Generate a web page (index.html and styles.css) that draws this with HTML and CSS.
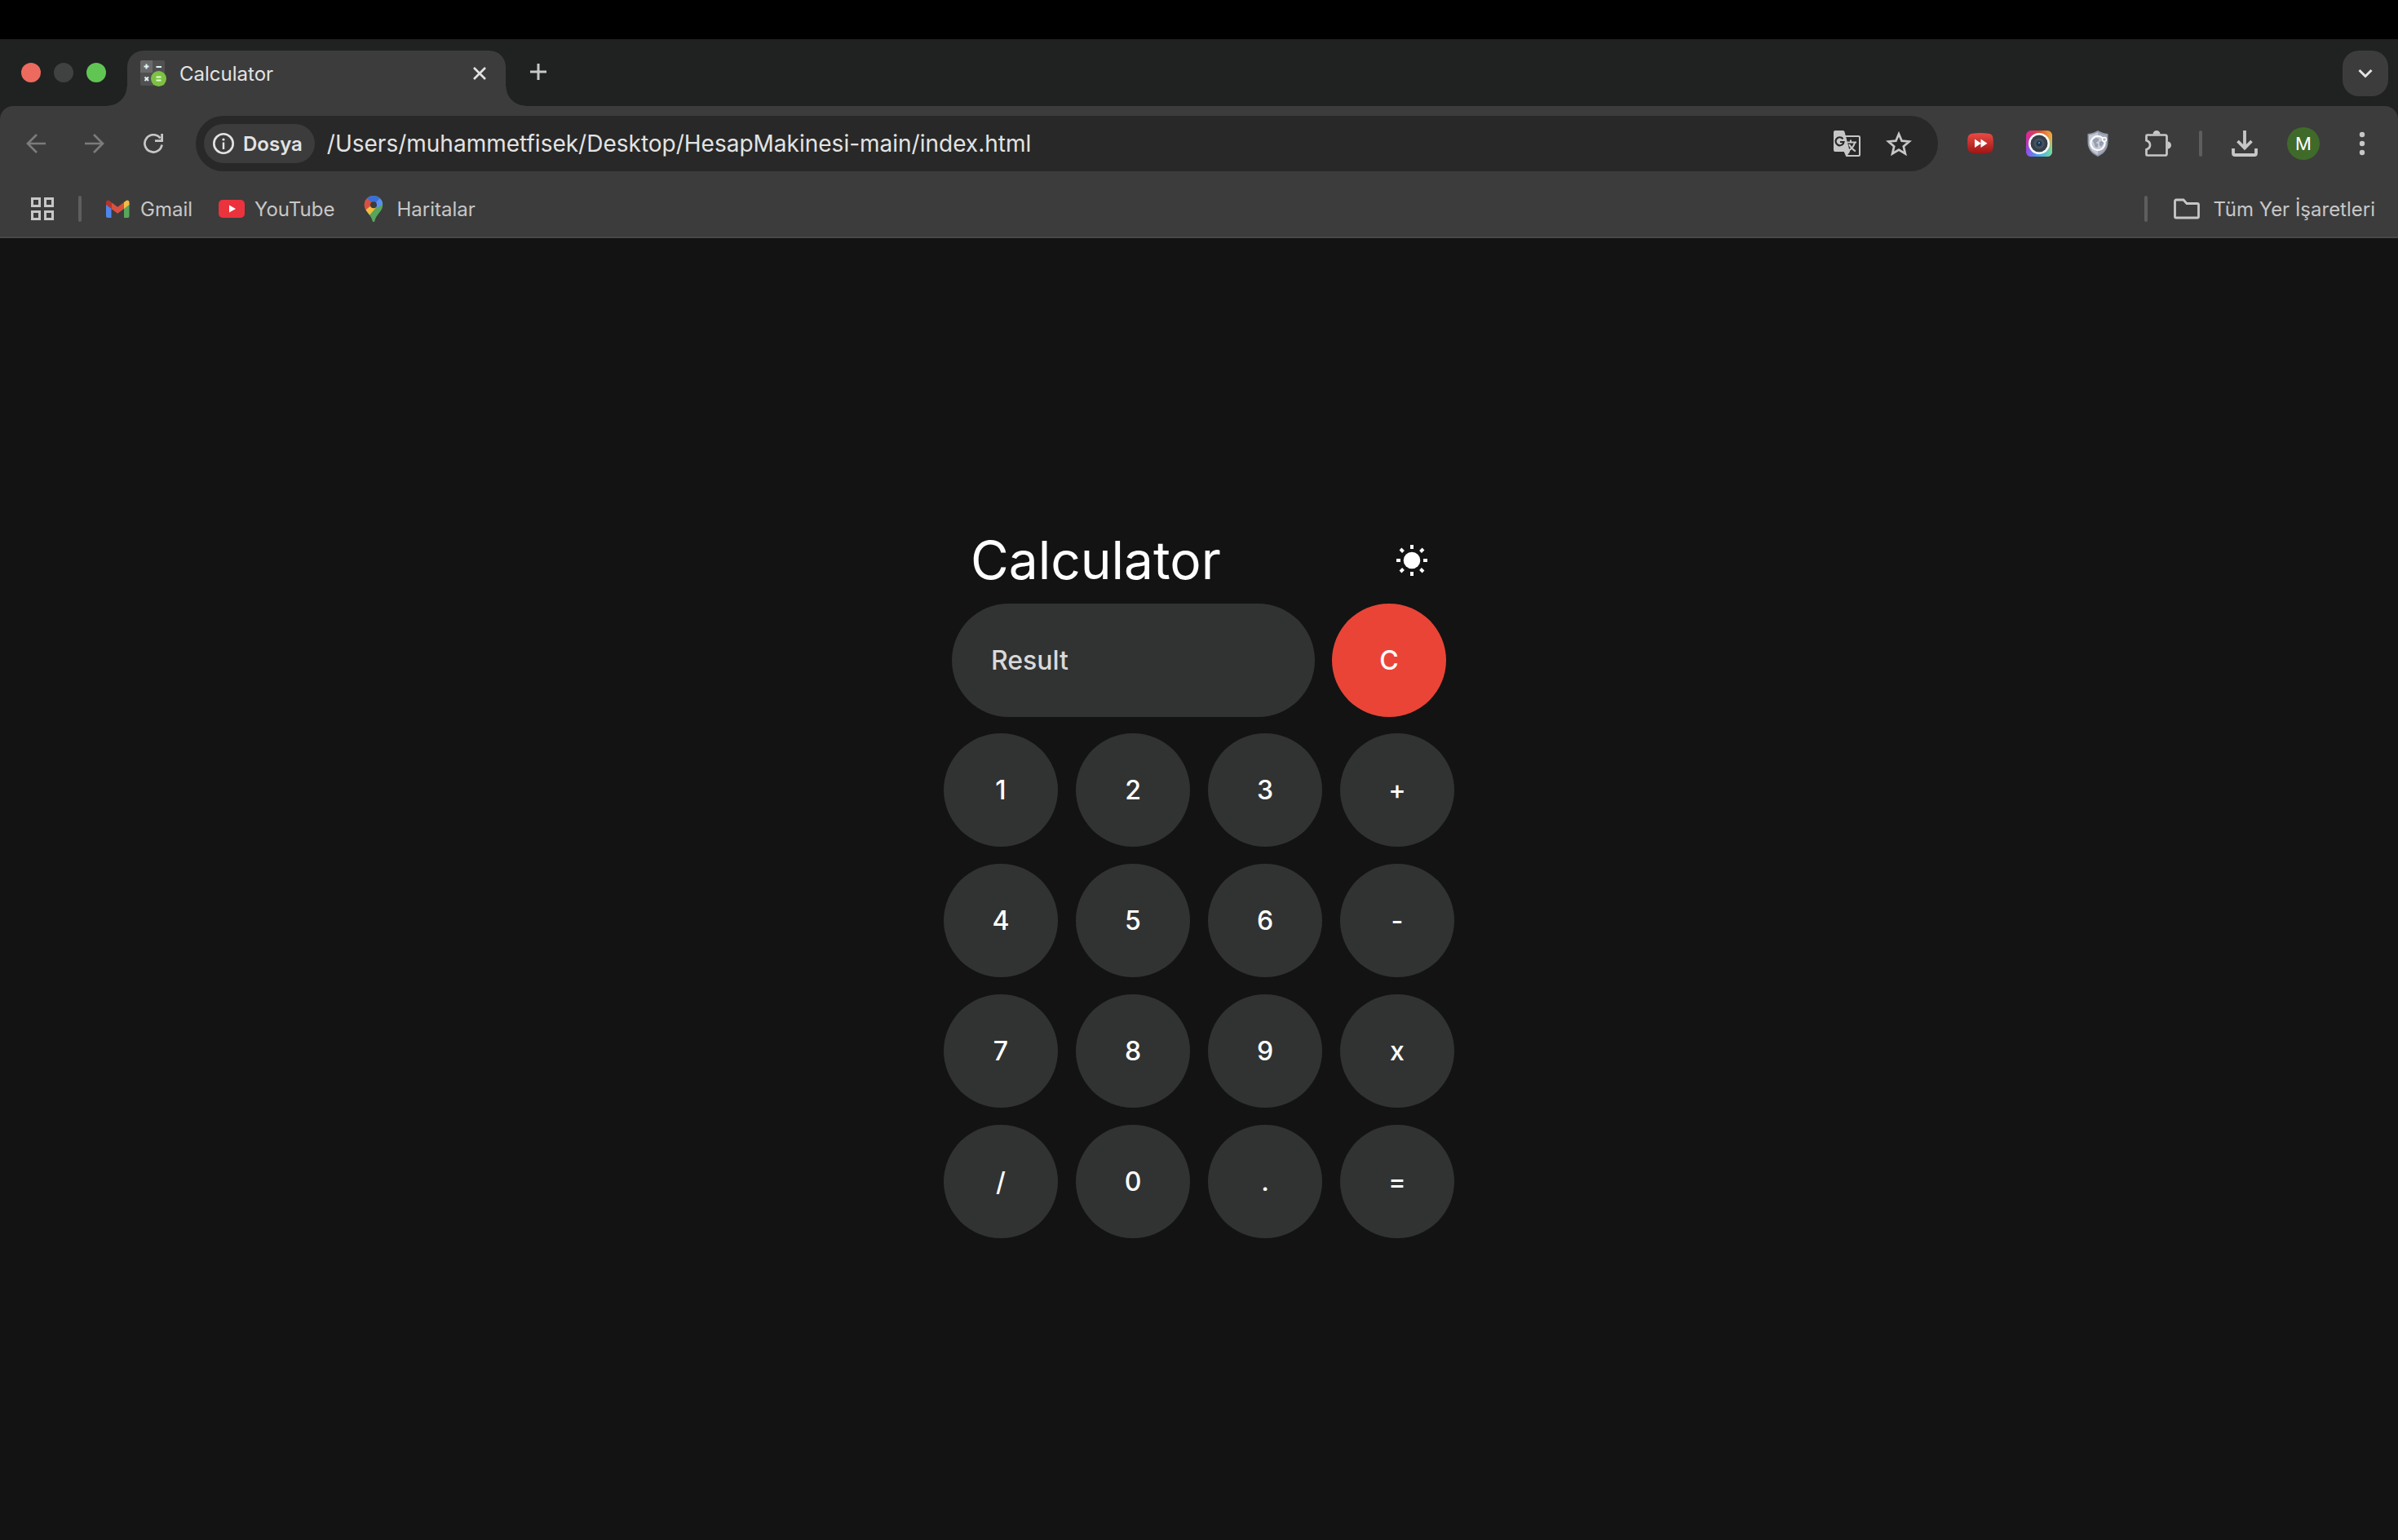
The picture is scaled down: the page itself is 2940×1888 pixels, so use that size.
FILE: index.html
```html
<!DOCTYPE html>
<html lang="tr">
<head>
<meta charset="utf-8">
<meta name="viewport" content="width=device-width, initial-scale=1">
<title>Calculator</title>
<link rel="stylesheet" href="styles.css">
</head>
<body>
<header class="browser">
  <div class="tab-strip">
    <div class="lights">
      <button class="light light-close" aria-label="Kapat"></button>
      <button class="light light-min" aria-label="Küçült"></button>
      <button class="light light-max" aria-label="Büyüt"></button>
    </div>
    <div class="tab">
      <svg class="icon-32" viewBox="0 0 32 32">
        <rect width="30" height="31" rx="2" fill="#505050"/>
        <path d="M2 0h13v15H0V2a2 2 0 0 1 2-2z" fill="#6a6a6a"/>
        <path d="M7.500 4.500v6M4.500 7.500h6M19.500 8h6.500M5.500 20.500l4.500 4.500M10 20.500l-4.500 4.500" stroke="#dff3f5" stroke-width="2" fill="none"/>
        <circle cx="22.500" cy="22.500" r="9.500" fill="#7cc242"/>
        <path d="M19.500 20.500h6M19.500 24.500h6" stroke="#e6f5da" stroke-width="2"/>
      </svg>
      <span class="tab-title">Calculator</span>
      <button class="plain" aria-label="Sekmeyi kapat">
        <svg class="icon-16" viewBox="0 0 16 16"><path d="M1 1l14 14M15 1L1 15" stroke="#e3e3e3" stroke-width="2.700"/></svg>
      </button>
    </div>
    <button class="plain new-tab" aria-label="Yeni sekme">
      <svg class="icon-20" viewBox="0 0 20 20"><path d="M10 0v20M0 10h20" stroke="#c7c7c7" stroke-width="3"/></svg>
    </button>
    <button class="plain tab-search" aria-label="Sekmelerde ara">
      <svg class="icon-20" viewBox="0 0 20 20"><path d="M2.500 6l7.500 7.500L17.500 6" stroke="#e3e3e3" stroke-width="3" fill="none"/></svg>
    </button>
  </div>

  <div class="toolbar">
    <div class="nav-row">
      <button class="plain tool" aria-label="Geri"><svg class="icon-24" viewBox="0 0 24 24"><path d="M24 12H2M13 1L2 12l11 11" stroke="#7b7b7b" stroke-width="2.700" fill="none"/></svg></button>
      <button class="plain tool" aria-label="İleri"><svg class="icon-24" viewBox="0 0 24 24"><path d="M0 12h22M11 1l11 11-11 11" stroke="#7b7b7b" stroke-width="2.700" fill="none"/></svg></button>
      <button class="plain tool" aria-label="Yenile"><svg class="icon-24" viewBox="0 0 24 24"><path d="M22.500 13.500A10.600 10.600 0 1 1 20.500 5.500" stroke="#c7c7c7" stroke-width="2.700" fill="none"/><path d="M22.600 0v8.600H14" stroke="#c7c7c7" stroke-width="2.800" fill="none"/></svg></button>
      <div class="omnibox">
        <button class="chip">
          <svg class="icon-26" viewBox="0 0 26 26"><circle cx="13" cy="13" r="11.700" stroke="#e3e3e3" stroke-width="2.600" fill="none"/><path d="M13 11.500V20" stroke="#e3e3e3" stroke-width="2.400"/><circle cx="13" cy="8" r="1.600" fill="#e3e3e3"/></svg>
          <span>Dosya</span>
        </button>
        <input class="url" type="text" aria-label="Adres" value="/Users/muhammetfisek/Desktop/HesapMakinesi-main/index.html">
        <button class="plain omni-action" aria-label="Çevir">
          <svg class="icon-34" viewBox="0 0 34 34">
            <path d="M14 8h17.500a1.500 1.500 0 0 1 1.500 1.500v21a1.500 1.500 0 0 1-1.500 1.500H17l-3-7" fill="none" stroke="#c7c7c7" stroke-width="2"/>
            <path d="M18 15.500h11M22 12.500v3M27 15.500c-1 5-4 8-8 10.500M20 18c2 4 4 6 8 8.500" fill="none" stroke="#c7c7c7" stroke-width="2"/>
            <path d="M3 1h9.500a2 2 0 0 1 2 1.500L21 27l-3.500 5-3-5H3a2 2 0 0 1-2-2V3a2 2 0 0 1 2-2z" fill="#c7c7c7"/>
            <path d="M12.500 11.200A5 5 0 1 0 13.500 15H9" fill="none" stroke="#282828" stroke-width="2.200"/>
          </svg>
        </button>
        <button class="plain omni-action" aria-label="Yer işareti ekle">
          <svg class="icon-32" viewBox="0 0 32 32"><path d="M16 4.200l3.600 8.500 9.200.8-7 6 2.100 9L16 23.700 8.100 28.500l2.100-9-7-6 9.200-.8z" fill="none" stroke="#c7c7c7" stroke-width="2.700"/></svg>
        </button>
      </div>
      <div class="tools">
        <button class="plain tool" aria-label="Hızlandırıcı">
          <svg class="icon-32" viewBox="0 0 32 32">
            <defs><linearGradient id="red" x2="0" y2="1"><stop stop-color="#ea4b45"/><stop offset="1" stop-color="#9f1414"/></linearGradient></defs>
            <path d="M6 3.800Q16 2.200 26 3.800Q31 4.500 31.500 9Q32.300 16 31.500 22Q31 26.800 26 27.600Q16 29.200 6 27.600Q1 26.800.500 22Q-.3 16 .500 9Q1 4.500 6 3.800z" fill="url(#red)"/>
            <path d="M9 10.500l8 5.200-8 5.200zM16.500 10.500l8 5.200-8 5.200z" fill="#fff"/>
          </svg>
        </button>
        <button class="plain tool" aria-label="Ekran yakalama">
          <svg class="icon-32" viewBox="0 0 32 32">
            <defs>
              <linearGradient id="camTop"><stop stop-color="#d8289c"/><stop offset=".5" stop-color="#e04a35"/><stop offset="1" stop-color="#f0b13c"/></linearGradient>
              <linearGradient id="camLow"><stop stop-color="#8a4cf0"/><stop offset=".45" stop-color="#4aa5ee"/><stop offset="1" stop-color="#68e0a8"/></linearGradient>
              <linearGradient id="camFade" x2="0" y2="1"><stop offset=".2" stop-color="#000"/><stop offset=".85" stop-color="#fff"/></linearGradient>
              <mask id="camMask"><rect width="32" height="32" fill="url(#camFade)"/></mask>
            </defs>
            <rect width="32" height="32" rx="6" fill="url(#camTop)"/>
            <rect width="32" height="32" rx="6" fill="url(#camLow)" mask="url(#camMask)"/>
            <circle cx="16" cy="16" r="13" fill="#fff"/><circle cx="16" cy="16" r="10.500" fill="#37414b"/>
            <circle cx="16" cy="16" r="6.500" fill="#46535f"/><circle cx="16" cy="16" r="3.500" fill="#1d3550"/><circle cx="16" cy="15" r="1" fill="#62a0c8"/>
          </svg>
        </button>
        <button class="plain tool" aria-label="Koruma">
          <svg class="icon-32" viewBox="0 0 32 32">
            <path d="M16 0c4 2.500 8 3.500 12.500 4v10c0 9-5 14.500-12.500 18C8.500 28.500 3.500 23 3.500 14V4C8 3.500 12 2.500 16 0z" fill="#8e96a8"/>
            <path d="M16 2c3.500 2 7 3 11 3.500V14c0 8-4.500 13-11 16z" fill="#a3a9b8"/><path d="M16 2v28C9.500 27 5 22 5 14V5.500C9 5 12.500 4 16 2z" fill="#c3c7d1"/>
            <circle cx="16" cy="15.500" r="8.700" fill="#c9ccd5" stroke="#fff" stroke-width="2"/>
            <path d="M9.500 12l4-3 4 1-1 3-3 2 3 2-1 4-3-1-1-4zM18 14l4-2 1 4-3 4-2-2z" fill="#969eb0"/>
            <circle cx="24" cy="11" r="2.500" fill="#b5bac7" stroke="#fff" stroke-width="1.400"/>
          </svg>
        </button>
        <button class="plain tool" aria-label="Uzantılar">
          <svg class="icon-36" viewBox="0 0 36 36"><path d="M6.500 7.500h22a2 2 0 0 1 2 2v21a2 2 0 0 1-2 2h-22a1 1 0 0 1-1-1v-6.300c6-2 6-9 0-11V8.500a1 1 0 0 1 1-1z" fill="none" stroke="#c7c7c7" stroke-width="2.700"/><path d="M13.500 6.500a4.500 4.500 0 0 1 9 0zM31.500 15.500a4.500 4.500 0 0 1 0 9z" fill="#c7c7c7"/></svg>
        </button>
        <span class="divider divider-tools"></span>
        <button class="plain tool" aria-label="İndirilenler">
          <svg class="icon-32" viewBox="0 0 32 32"><path d="M16 0v21M7.500 13l8.500 8.500 8.500-8.500M2 22v6a2 2 0 0 0 2 2h24a2 2 0 0 0 2-2v-6" fill="none" stroke="#c7c7c7" stroke-width="3.800"/></svg>
        </button>
        <button class="plain tool" aria-label="Profil"><span class="avatar">M</span></button>
        <button class="plain tool" aria-label="Menü">
          <svg class="icon-32" viewBox="0 0 32 32"><g fill="#c7c7c7"><circle cx="16" cy="5" r="3.200"/><circle cx="16" cy="16" r="3.200"/><circle cx="16" cy="27" r="3.200"/></g></svg>
        </button>
      </div>
    </div>

    <nav class="bookmarks">
      <button class="plain" aria-label="Uygulamalar">
        <svg class="icon-28" viewBox="0 0 28 28"><path d="M1.500 1.500h9v9h-9zM17.500 1.500h9v9h-9zM1.500 17.500h9v9h-9zM17.500 17.500h9v9h-9z" fill="none" stroke="#c7c7c7" stroke-width="3"/></svg>
      </button>
      <span class="divider divider-apps"></span>
      <div class="links">
        <a class="bookmark" href="#gmail">
          <svg class="icon-32" viewBox="0 0 32 32">
            <path d="M2 9l6.500 5v13H4a2 2 0 0 1-2-2z" fill="#4f86ec"/><path d="M24 14l6.500-5v16a2 2 0 0 1-2 2H24z" fill="#58a55c"/>
            <path d="M24 8l2.500-2c2-1.500 4 0 4 2v3L24 16z" fill="#f2bd42"/><path d="M8.500 8l7.700 5.700L24 8v8l-7.800 5.700L8.500 16z" fill="#d95040"/><path d="M2 8c0-2 2.200-3.500 4-2l2.500 2v8L2 11z" fill="#b5352a"/>
          </svg>Gmail</a>
        <a class="bookmark" href="#youtube">
          <svg class="icon-32" viewBox="0 0 32 32"><rect y="5" width="32" height="22" rx="5" fill="#ea333d"/><path d="M13 11.500l8 4.500-8 4.500z" fill="#fff"/></svg>YouTube</a>
        <a class="bookmark" href="#haritalar">
          <svg class="icon-32" viewBox="0 0 32 32">
            <defs><clipPath id="pin"><path d="M16 0a11.200 11.200 0 0 1 11.200 11.200c0 8-7.700 11-9.700 19.300a1.500 1.500 0 0 1-3 0C12.500 22.200 4.800 19 4.800 11.200A11.200 11.200 0 0 1 16 0z"/></clipPath></defs>
            <g clip-path="url(#pin)"><path d="M0 0h32v32H0z" fill="#58a55c"/><path d="M0 24L16 11V0h-9L0 4z" fill="#d95040"/><path d="M0 22l12.500-9.500 7 1.500L9 26z" fill="#f2bd42"/><path d="M0 0v13l4-3L8 3l8 8 10-7V0z" fill="#3a6fd8"/><path d="M3 7l5-4 5 5-7 8-6 2z" fill="#d95040"/><path d="M16 11l9-9 4 7-9 6z" fill="#5a8ff0"/></g>
            <circle cx="16" cy="11.200" r="4" fill="#3c3c3c"/>
          </svg>Haritalar</a>
      </div>
      <span class="divider divider-all"></span>
      <a class="bookmark bookmark-all" href="#tum">
        <svg class="icon-32" viewBox="0 0 32 32"><path d="M3 5h9l4 4.500h13a1.500 1.500 0 0 1 1.500 1.500v14.500A1.500 1.500 0 0 1 29 27H3a1.500 1.500 0 0 1-1.500-1.500v-19A1.500 1.500 0 0 1 3 5z" fill="none" stroke="#c7c7c7" stroke-width="2.800"/></svg>Tüm Yer İşaretleri</a>
    </nav>
  </div>
</header>

<main class="page">
  <section class="calculator">
    <div class="calc-head">
      <h1 class="calc-title">Calculator</h1>
      <button class="plain" aria-label="Temayı değiştir">
        <svg class="icon-38" viewBox="0 0 38 38"><circle cx="19" cy="19" r="10.300" fill="#fff"/><path d="M19 0v5M19 33v5M0 19h5M33 19h5M5 5l3.500 3.500M29.500 29.500L33 33M33 5l-3.500 3.500M8.500 29.500L5 33" stroke="#fff" stroke-width="4"/></svg>
      </button>
    </div>
    <div class="calc-display">
      <input class="result" type="text" aria-label="Result" placeholder="Result">
      <button class="key key-clear">C</button>
    </div>
    <div class="keys">
      <button class="key">1</button><button class="key">2</button><button class="key">3</button><button class="key">+</button>
      <button class="key">4</button><button class="key">5</button><button class="key">6</button><button class="key">-</button>
      <button class="key">7</button><button class="key">8</button><button class="key">9</button><button class="key">x</button>
      <button class="key">/</button><button class="key">0</button><button class="key">.</button><button class="key">=</button>
    </div>
  </section>
</main>
</body>
</html>
```
FILE: styles.css
```css
* { box-sizing: border-box; }

body {
  margin: 0;
  min-height: 100vh;
  display: flex;
  flex-direction: column;
  background: #131313;
  font-family: Inter, "Liberation Sans", sans-serif;
  font-size: 24px;
}

button, input { font: inherit; border: 0; margin: 0; padding: 0; }
button { cursor: pointer; }
svg { display: block; flex: none; }

.plain {
  display: flex;
  align-items: center;
  justify-content: center;
  background: none;
}

.icon-16 { width: 16px; height: 16px; }
.icon-20 { width: 20px; height: 20px; }
.icon-24 { width: 24px; height: 24px; }
.icon-26 { width: 26px; height: 26px; }
.icon-28 { width: 28px; height: 28px; }
.icon-32 { width: 32px; height: 32px; }
.icon-34 { width: 34px; height: 34px; }
.icon-36 { width: 36px; height: 36px; }
.icon-38 { width: 38px; height: 38px; }

/* Window frame */
.browser {
  border-top: 48px solid #000;
  background: #1f2221;
}

.tab-strip {
  display: flex;
  padding: 14px 12px 0 26px;
}

.lights {
  display: flex;
  gap: 16px;
  margin-right: 26px;
  padding-top: 15px;
}

.light {
  width: 24px;
  height: 24px;
  border-radius: 50%;
}
.light-close { background: #ed6a5e; }
.light-min { background: #404241; }
.light-max { background: #61c554; }

.tab {
  position: relative;
  display: flex;
  align-items: center;
  gap: 16px;
  width: 464px;
  height: 68px;
  padding: 0 24px 12px 16px;
  border-radius: 20px 20px 0 0;
  background: #3c3c3c;
  color: #e3e3e3;
}

/* Outward curves where the tab meets the toolbar */
.tab::before,
.tab::after {
  content: "";
  position: absolute;
  bottom: 0;
  width: 24px;
  height: 24px;
}
.tab::before {
  right: 100%;
  background: radial-gradient(circle at 0 0, transparent 23px, #3c3c3c 24px);
}
.tab::after {
  left: 100%;
  background: radial-gradient(circle at 100% 0, transparent 23px, #3c3c3c 24px);
}

.tab-title { flex: 1; }

.new-tab {
  width: 56px;
  height: 52px;
  margin-left: 12px;
}

.tab-search {
  width: 56px;
  height: 56px;
  margin-left: auto;
  border-radius: 20px;
  background: #3c3c3c;
}

/* Toolbar */
.toolbar {
  border-bottom: 2px solid #484848;
  border-radius: 16px 16px 0 0;
  background: #3c3c3c;
}

.nav-row {
  display: flex;
  align-items: center;
  height: 92px;
  padding: 0 8px;
}

.tool {
  width: 72px;
  height: 68px;
}

.omnibox {
  flex: 1;
  display: flex;
  align-items: center;
  height: 68px;
  margin: 0 16px;
  padding: 0 16px 0 10px;
  border-radius: 34px;
  background: #282828;
}

.chip {
  display: flex;
  align-items: center;
  gap: 11px;
  height: 48px;
  padding: 0 15px 0 11px;
  border-radius: 24px;
  background: #3c3c3c;
  color: #e3e3e3;
  font-weight: 600;
}

.url {
  flex: 1;
  height: 68px;
  margin-left: 15px;
  background: none;
  color: #e3e3e3;
  font-size: 28px;
  outline: 0;
}

.omni-action {
  width: 64px;
  height: 68px;
}

.tools {
  display: flex;
  align-items: center;
}

.avatar {
  width: 40px;
  height: 40px;
  border-radius: 50%;
  background: #406a29;
  color: #fff;
  font-size: 22px;
  line-height: 40px;
}

.divider {
  width: 4px;
  height: 32px;
  border-radius: 2px;
  background: #5e5e5e;
}
.divider-tools { margin: 0 16px; }
.divider-apps { margin: 0 28px 0 30px; }
.divider-all { margin: 0 32px 0 auto; }

/* Bookmarks */
.bookmarks {
  display: flex;
  align-items: center;
  height: 68px;
  padding: 0 28px 0 38px;
}

.links {
  display: flex;
  gap: 32px;
}

.bookmark {
  display: flex;
  align-items: center;
  gap: 12px;
  color: #c7c7c7;
  text-decoration: none;
}
.bookmark-all { gap: 16px; }

/* Calculator */
.page {
  flex: 1;
  display: flex;
  align-items: center;
  justify-content: center;
}

.calc-head {
  display: flex;
  align-items: center;
  justify-content: space-between;
  height: 50px;
  margin-bottom: 28px;
  padding: 0 33px;
}

.calc-title {
  margin: 0;
  color: #fff;
  font-size: 64px;
  font-weight: 400;
  line-height: 50px;
}

.calc-display {
  display: flex;
  gap: 21px;
  margin-bottom: 20px;
  padding: 0 10px;
}

.result {
  flex: 1;
  width: 0;
  height: 139px;
  padding: 0 48px;
  border-radius: 70px;
  background: #313332;
  color: #fff;
  font-size: 32px;
  font-weight: 500;
  outline: 0;
}
.result::placeholder { color: #d9d9d9; opacity: 1; }

.keys {
  display: grid;
  grid-template-columns: repeat(4, 140px);
  gap: 21px 22px;
}

.key {
  width: 140px;
  height: 139px;
  border-radius: 50%;
  background: #313332;
  color: #fff;
  font-size: 32px;
  font-weight: 500;
}
.key-clear { background: #ea4437; }
```
